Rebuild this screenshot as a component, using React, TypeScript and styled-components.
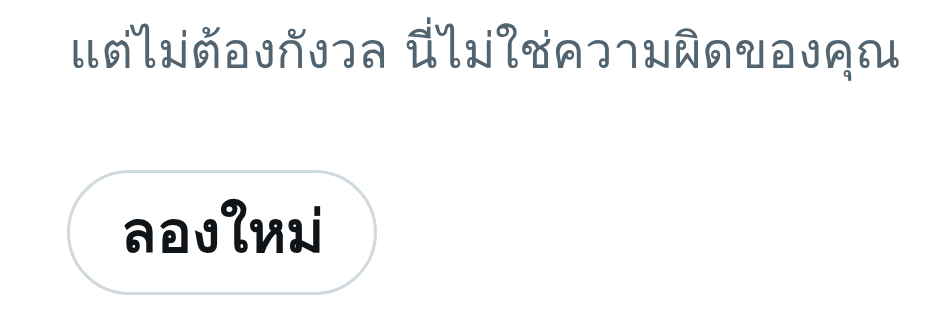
import React from "react";
import styled, { createGlobalStyle } from "styled-components";

const Global = createGlobalStyle`
  html, body { margin: 0; padding: 0; background: #ffffff; }
  body { font-family: "DejaVu Sans", serif; }
`;

const Page = styled.div`
  width: 935px;
  height: 312px;
  box-sizing: border-box;
  padding: 18px 0 0 67px;
  display: flex;
  flex-direction: column;
  align-items: flex-start;
  gap: 86px;
  overflow: hidden;
`;

const Message = styled.div`
  color: #536471;
  font-size: 49.2px;
  line-height: 66px;
  font-weight: 400;
  white-space: nowrap;
  padding-left: 2px;
`;

const RetryButton = styled.button`
  box-sizing: border-box;
  width: 310px;
  height: 125px;
  padding: 0 0 2px;
  border: 3px solid #cfd9de;
  border-radius: 63px;
  background: #ffffff;
  color: #0f1419;
  font-family: inherit;
  font-size: 58px;
  font-weight: 700;
  display: flex;
  align-items: center;
  justify-content: center;
  cursor: pointer;
`;

export default function App() {
  return (
    <>
      <Global />
      <Page>
        <Message>แต่ไม่ต้องกังวล นี่ไม่ใช่ความผิดของคุณ</Message>
        <RetryButton>ลองใหม่</RetryButton>
      </Page>
    </>
  );
}
